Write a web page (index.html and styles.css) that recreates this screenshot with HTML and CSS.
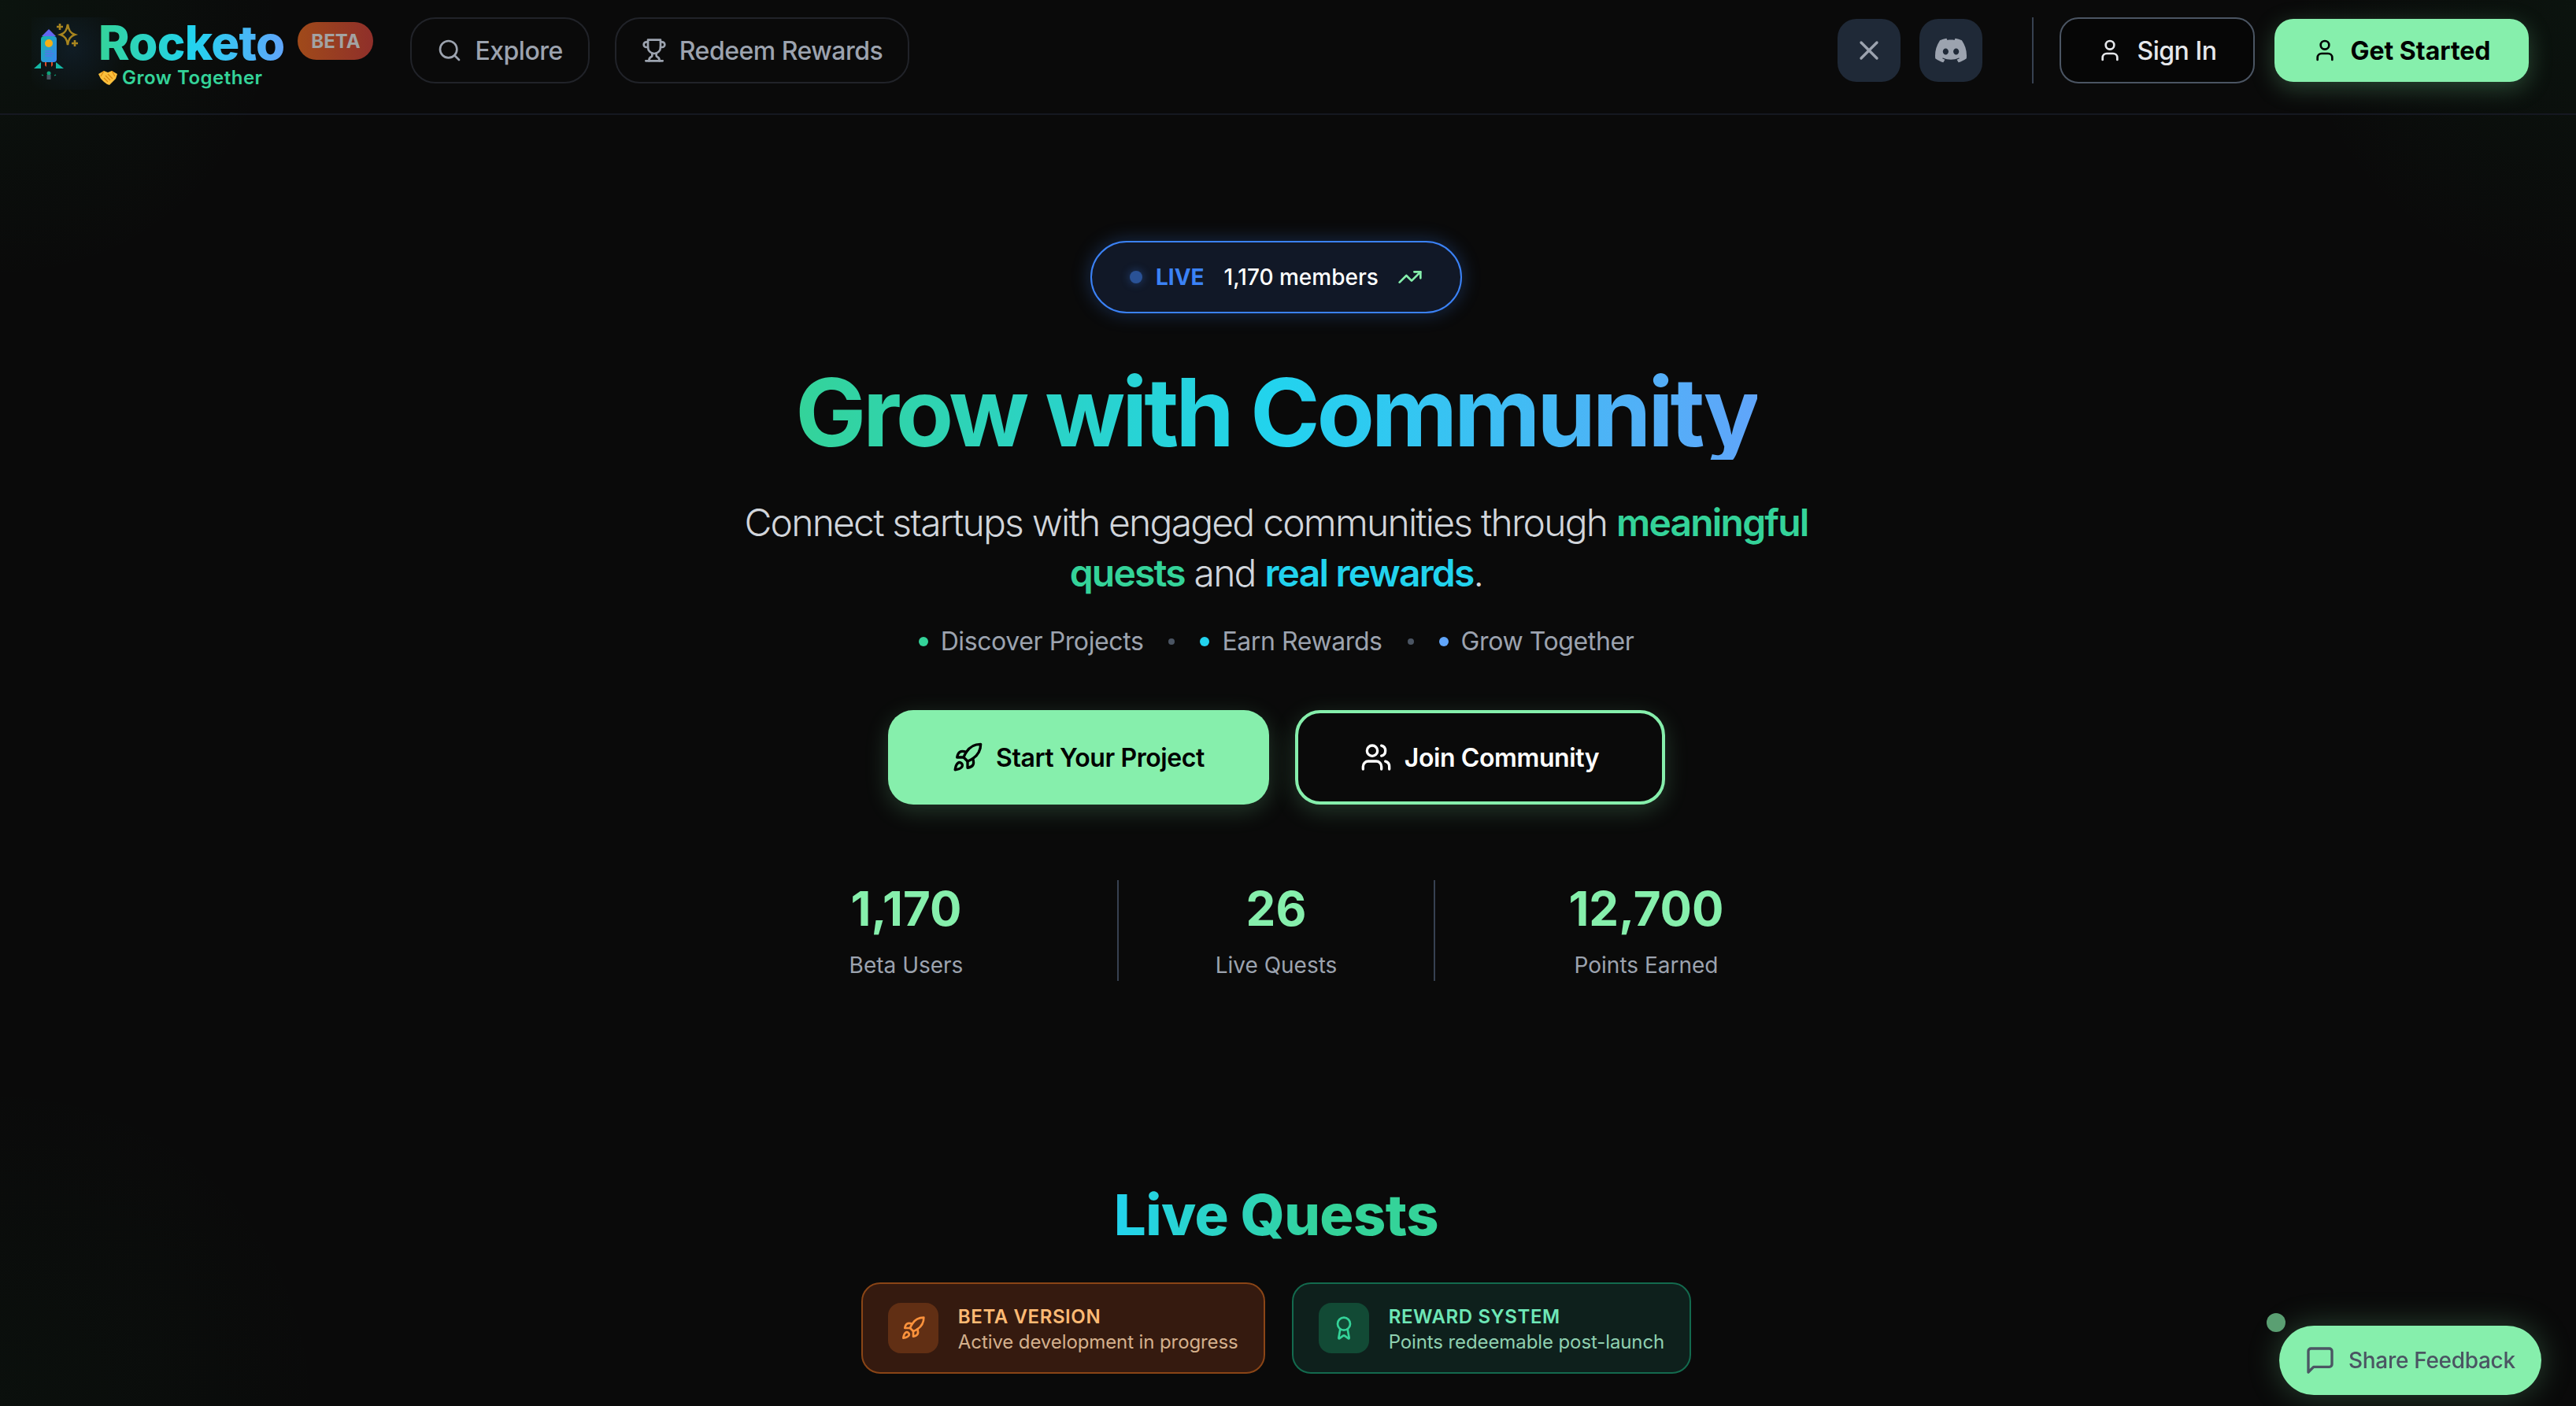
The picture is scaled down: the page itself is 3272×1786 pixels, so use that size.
FILE: index.html
```html
<!DOCTYPE html>
<html lang="en">
<head>
    <meta charset="UTF-8">
    <meta name="viewport" content="width=device-width, initial-scale=1.0">
    <title>Rocketo</title>
    <link rel="stylesheet" href="styles.css">
</head>
<body>
    <svg class="sprite" width="0" height="0">
        <symbol id="i-search" viewBox="0 0 24 24"><circle cx="11" cy="11" r="8"/><path d="m21 21-4.3-4.3"/></symbol>
        <symbol id="i-trophy" viewBox="0 0 24 24"><path d="M6 9H4.5a2.5 2.5 0 0 1 0-5H6"/><path d="M18 9h1.5a2.5 2.5 0 0 0 0-5H18"/><path d="M4 22h16"/><path d="M10 14.66V17c0 .55-.47.98-.97 1.21C7.85 18.75 7 20.24 7 22"/><path d="M14 14.66V17c0 .55.47.98.97 1.21C16.15 18.75 17 20.24 17 22"/><path d="M18 2H6v7a6 6 0 0 0 12 0V2Z"/></symbol>
        <symbol id="i-x" viewBox="0 0 24 24"><path d="M18 6 6 18"/><path d="m6 6 12 12"/></symbol>
        <symbol id="i-user" viewBox="0 0 24 24"><path d="M19 21v-2a4 4 0 0 0-4-4H9a4 4 0 0 0-4 4v2"/><circle cx="12" cy="7" r="4"/></symbol>
        <symbol id="i-users" viewBox="0 0 24 24"><path d="M16 21v-2a4 4 0 0 0-4-4H6a4 4 0 0 0-4 4v2"/><circle cx="9" cy="7" r="4"/><path d="M22 21v-2a4 4 0 0 0-3-3.87"/><path d="M16 3.13a4 4 0 0 1 0 7.75"/></symbol>
        <symbol id="i-rocket" viewBox="0 0 24 24"><path d="M4.5 16.5c-1.5 1.26-2 5-2 5s3.74-.5 5-2c.71-.84.7-2.13-.09-2.91a2.18 2.18 0 0 0-2.91-.09z"/><path d="m12 15-3-3a22 22 0 0 1 2-3.95A12.88 12.88 0 0 1 22 2c0 2.72-.78 7.5-6 11a22.35 22.35 0 0 1-4 2z"/><path d="M9 12H4s.55-3.03 2-4c1.62-1.08 5 0 5 0"/><path d="M12 15v5s3.03-.55 4-2c1.08-1.62 0-5 0-5"/></symbol>
        <symbol id="i-trend" viewBox="0 0 24 24"><polyline points="22 7 13.5 15.5 8.5 10.5 2 17"/><polyline points="16 7 22 7 22 13"/></symbol>
        <symbol id="i-award" viewBox="0 0 24 24"><path d="m15.477 12.89 1.515 8.526a.5.5 0 0 1-.81.47l-3.58-2.687a1 1 0 0 0-1.197 0l-3.586 2.686a.5.5 0 0 1-.81-.469l1.514-8.526"/><circle cx="12" cy="8" r="6"/></symbol>
        <symbol id="i-message" viewBox="0 0 24 24"><path d="M21 15a2 2 0 0 1-2 2H7l-4 4V5a2 2 0 0 1 2-2h14a2 2 0 0 1 2 2z"/></symbol>
    </svg>

    <header class="header">
        <a class="logo">
            <svg class="logo-mark" viewBox="0 0 64 84">
                <defs>
                    <linearGradient id="rocketBody" x1="0" y1="0" x2="1" y2="1">
                        <stop offset="0" stop-color="#14b8a6"/>
                        <stop offset="1" stop-color="#3b82f6"/>
                    </linearGradient>
                </defs>
                <path d="M13 16 22 7 31 16Z" fill="#6366f1"/>
                <rect x="12" y="16" width="20" height="33" rx="4" fill="url(#rocketBody)"/>
                <circle cx="22" cy="25" r="5" fill="#f5b014"/>
                <path d="M17 35h9M17 38h11M17 41h9" stroke="#6366f1" stroke-width="1.2"/>
                <path d="M12 49 3 57H12ZM31 49 41 57H31Z" fill="#14b8a6"/>
                <path d="M17 49h2v6l-2-2ZM27 49h-2v6l2-2Z" fill="#dc4a26"/>
                <circle cx="22" cy="63" r="2.5" fill="#10a37a"/>
                <rect x="19.5" y="65" width="5" height="6" fill="#4b5563"/>
                <path d="M13 65l2 1M31 65l-2 1" stroke="#10a37a" stroke-width="1.2"/>
                <path d="M46 1c1 7 3 11 9 13-6 2-8 6-9 13-1-7-3-11-9-13 6-2 8-6 9-13Z" fill="none" stroke="#a8851f" stroke-width="2.6"/>
                <path d="M36 0v8M32 4h8M55 21v8M51 25h8" stroke="#a8851f" stroke-width="2.6"/>
            </svg>
            <span class="logo-text">
                <span class="logo-name">Rocketo</span>
                <span class="logo-tag">
                    <svg class="handshake" viewBox="0 0 24 18">
                        <path d="M0 4 7 0l5 2 5-2 7 4-2 6-8 8-3-1-4-3-4-4Z" fill="#fbbf3c"/>
                        <path d="M7 0 3 7M17 0l4 7" stroke="#e08e12" stroke-width="1.4"/>
                        <path d="M9 6l6 6M7 9l5 5M12 4l6 6" stroke="#d9860f" stroke-width="1.2"/>
                    </svg>
                    Grow Together
                </span>
            </span>
            <span class="beta-badge">BETA</span>
        </a>
        <nav class="nav">
            <a class="nav-link"><svg class="icon"><use href="#i-search"/></svg>Explore</a>
            <a class="nav-link"><svg class="icon"><use href="#i-trophy"/></svg>Redeem Rewards</a>
        </nav>
        <div class="header-right">
            <a class="social"><svg class="icon icon-x"><use href="#i-x"/></svg></a>
            <a class="social">
                <svg class="discord" viewBox="0 0 24 24"><path d="M20.317 4.3698a19.7913 19.7913 0 00-4.8851-1.5152.0741.0741 0 00-.0785.0371c-.211.3753-.4447.8648-.6083 1.2495-1.8447-.2762-3.68-.2762-5.4868 0-.1636-.3933-.4058-.8742-.6177-1.2495a.077.077 0 00-.0785-.037 19.7363 19.7363 0 00-4.8852 1.515.0699.0699 0 00-.0321.0277C.5334 9.0458-.319 13.5799.0992 18.0578a.0824.0824 0 00.0312.0561c2.0528 1.5076 4.0413 2.4228 5.9929 3.0294a.0777.0777 0 00.0842-.0276c.4616-.6304.8731-1.2952 1.226-1.9942a.076.076 0 00-.0416-.1057c-.6528-.2476-1.2743-.5495-1.8722-.8923a.077.077 0 01-.0076-.1277c.1258-.0943.2517-.1923.3718-.2914a.0743.0743 0 01.0776-.0105c3.9278 1.7933 8.18 1.7933 12.0614 0a.0739.0739 0 01.0785.0095c.1202.099.246.1981.3728.2924a.077.077 0 01-.0066.1276 12.2986 12.2986 0 01-1.873.8914.0766.0766 0 00-.0407.1067c.3604.698.7719 1.3628 1.225 1.9932a.076.076 0 00.0842.0286c1.961-.6067 3.9495-1.5219 6.0023-3.0294a.077.077 0 00.0313-.0552c.5004-5.177-.8382-9.6739-3.5485-13.6604a.061.061 0 00-.0312-.0286zM8.02 15.3312c-1.1825 0-2.1569-1.0857-2.1569-2.419 0-1.3332.9555-2.4189 2.157-2.4189 1.2108 0 2.1757 1.0952 2.1568 2.419 0 1.3332-.9555 2.4189-2.1569 2.4189zm7.9748 0c-1.1825 0-2.1569-1.0857-2.1569-2.419 0-1.3332.9554-2.4189 2.1569-2.4189 1.2108 0 2.1757 1.0952 2.1568 2.419 0 1.3332-.946 2.4189-2.1568 2.4189z"/></svg>
            </a>
            <span class="header-divider"></span>
            <a class="btn-signin"><svg class="icon"><use href="#i-user"/></svg>Sign In</a>
            <a class="btn-started"><svg class="icon"><use href="#i-user"/></svg>Get Started</a>
        </div>
    </header>

    <main class="main">
        <section class="hero">
            <div class="live-pill">
                <span class="live-dot"></span>
                <span class="live-label">LIVE</span>
                <span class="live-count">1,170 members</span>
                <svg class="icon live-trend"><use href="#i-trend"/></svg>
            </div>
            <h1 class="hero-title">Grow with Community</h1>
            <p class="hero-text">Connect startups with engaged communities through <strong class="hl-green">meaningful</strong> <strong class="hl-green">quests</strong> and <strong class="hl-cyan">real rewards</strong>.</p>
            <ul class="hero-points">
                <li><span class="point-dot dot-green"></span>Discover Projects</li>
                <li class="point-sep"></li>
                <li><span class="point-dot dot-cyan"></span>Earn Rewards</li>
                <li class="point-sep"></li>
                <li><span class="point-dot dot-blue"></span>Grow Together</li>
            </ul>
            <div class="hero-actions">
                <a class="cta cta-primary"><svg class="icon"><use href="#i-rocket"/></svg>Start Your Project</a>
                <a class="cta cta-outline"><svg class="icon"><use href="#i-users"/></svg>Join Community</a>
            </div>
            <div class="stats">
                <div class="stat stat-side"><div class="stat-num">1,170</div><div class="stat-label">Beta Users</div></div>
                <div class="stat stat-mid"><div class="stat-num">26</div><div class="stat-label">Live Quests</div></div>
                <div class="stat stat-side"><div class="stat-num">12,700</div><div class="stat-label">Points Earned</div></div>
            </div>
        </section>

        <section class="quests">
            <h2 class="quests-title">Live Quests</h2>
            <div class="notices">
                <div class="notice notice-orange">
                    <span class="notice-icon"><svg class="icon"><use href="#i-rocket"/></svg></span>
                    <div class="notice-body">
                        <div class="notice-title">BETA VERSION</div>
                        <div class="notice-sub">Active development in progress</div>
                    </div>
                </div>
                <div class="notice notice-green">
                    <span class="notice-icon"><svg class="icon"><use href="#i-award"/></svg></span>
                    <div class="notice-body">
                        <div class="notice-title">REWARD SYSTEM</div>
                        <div class="notice-sub">Points redeemable post-launch</div>
                    </div>
                </div>
            </div>
        </section>
    </main>

    <a class="feedback">
        <span class="feedback-dot"></span>
        <svg class="icon"><use href="#i-message"/></svg>Share Feedback
    </a>
</body>
</html>
```

FILE: styles.css
```css
* {
    box-sizing: border-box;
}

html, body {
    height: 100%;
}

body {
    margin: 0;
    overflow: hidden;
    font-family: 'Inter', 'Liberation Sans', sans-serif;
    color: #fff;
    background:
        radial-gradient(circle 360px at 0 0, rgba(34, 197, 94, 0.05), transparent),
        radial-gradient(circle 360px at 100% 0, rgba(34, 197, 94, 0.05), transparent),
        radial-gradient(circle 420px at 0 100%, rgba(34, 197, 94, 0.03), transparent),
        #0a0a0a;
}

.sprite {
    position: absolute;
}

.icon {
    width: 32px;
    height: 32px;
    flex: none;
    fill: none;
    stroke: currentColor;
    stroke-width: 2;
    stroke-linecap: round;
    stroke-linejoin: round;
}

.icon-x {
    width: 40px;
    height: 40px;
}

a {
    display: flex;
    align-items: center;
}

/* header */
.header {
    height: 146px;
    display: flex;
    align-items: flex-start;
    padding: 22px 60px 0 40px;
    border-bottom: 2px solid #151821;
}

.logo {
    margin-right: 47px;
    background: radial-gradient(circle 70px at 52px 40px, rgba(59, 130, 246, 0.1), transparent);
}

.logo-mark {
    width: 64px;
    height: 84px;
    margin-top: 8px;
    margin-right: 21px;
}

.logo-text {
    display: flex;
    flex-direction: column;
}

.logo-name {
    font-size: 60px;
    font-weight: 800;
    line-height: 62px;
    letter-spacing: -0.75px;
    background: linear-gradient(90deg, #34d399, #22d3ee, #60a5fa);
    -webkit-background-clip: text;
    background-clip: text;
    color: transparent;
}

.logo-tag {
    display: flex;
    align-items: center;
    font-size: 24px;
    font-weight: 600;
    line-height: 28px;
    letter-spacing: 0.5px;
    color: #34d399;
}

.handshake {
    width: 24px;
    height: 18px;
    margin-right: 6px;
}

.beta-badge {
    align-self: flex-start;
    margin: 6px 0 0 17px;
    width: 96px;
    height: 48px;
    display: flex;
    align-items: center;
    justify-content: center;
    border-radius: 24px;
    font-size: 24px;
    font-weight: 700;
    color: #a3a3a3;
    background: linear-gradient(90deg, #a04a1a, #8f2f2a);
}

.nav {
    display: flex;
    gap: 32px;
}

.nav-link {
    height: 84px;
    gap: 16px;
    padding: 0 32px;
    border: 2px solid #212329;
    border-radius: 32px;
    font-size: 32px;
    font-weight: 500;
    letter-spacing: -0.5px;
    color: #9ca3af;
}

.header-right {
    margin-left: auto;
    display: flex;
    align-items: center;
}

.social {
    width: 80px;
    height: 80px;
    justify-content: center;
    margin-right: 24px;
    border-radius: 24px;
    background: #1f2937;
    color: #9ca3af;
}

.discord {
    width: 40px;
    height: 40px;
    fill: #9ca3af;
}

.header-divider {
    width: 2px;
    height: 84px;
    margin: 0 33px 0 39px;
    background: #374151;
}

.btn-signin {
    width: 248px;
    height: 84px;
    justify-content: center;
    gap: 18px;
    margin-right: 25px;
    border: 2px solid #4b5563;
    border-radius: 24px;
    font-size: 32px;
    font-weight: 500;
    letter-spacing: -0.45px;
    color: #e5e7eb;
    background: #060606;
}

.btn-started {
    width: 323px;
    height: 80px;
    justify-content: center;
    gap: 16px;
    border-radius: 24px;
    font-size: 32px;
    font-weight: 700;
    color: #000;
    background: #86efac;
    box-shadow: 0 8px 30px rgba(134, 239, 172, 0.25);
}

/* hero */
.main {
    padding-right: 30px;
}

.hero {
    padding-top: 160px;
    display: flex;
    flex-direction: column;
    align-items: center;
}

.live-pill {
    height: 92px;
    width: 472px;
    display: flex;
    align-items: center;
    padding-left: 48px;
    border: 2px solid #3b82f6;
    border-radius: 46px;
    background: #111827;
    box-shadow: 0 0 24px rgba(59, 130, 246, 0.3);
    font-size: 28px;
}

.live-dot {
    width: 16px;
    height: 16px;
    border-radius: 50%;
    background: #2a5296;
    box-shadow: 0 0 12px rgba(59, 130, 246, 0.4);
}

.live-label {
    margin-left: 17px;
    font-weight: 700;
    color: #3b82f6;
}

.live-count {
    margin-left: 25px;
    font-weight: 500;
}

.live-trend {
    margin-left: 24px;
    color: #86efac;
}

.hero-title {
    margin: 66px 0 0;
    font-size: 120px;
    font-weight: 700;
    line-height: 120px;
    letter-spacing: -4.25px;
    background: linear-gradient(90deg, #34d399, #22d3ee, #60a5fa);
    -webkit-background-clip: text;
    background-clip: text;
    color: transparent;
}

.hero-text {
    width: 1400px;
    margin: 48px 0 0;
    font-size: 48px;
    font-weight: 350;
    line-height: 64px;
    letter-spacing: -1.8px;
    text-align: center;
    color: #d1d5db;
}

.hero-text strong {
    font-weight: 600;
}

.hl-green {
    color: #34d399;
}

.hl-cyan {
    color: #22d3ee;
}

.hero-points {
    list-style: none;
    display: flex;
    align-items: center;
    gap: 32px;
    margin: 35px 0 0;
    padding: 0;
    font-size: 32px;
    letter-spacing: -0.4px;
    color: #9ca3af;
}

.hero-points li {
    display: flex;
    align-items: center;
    gap: 16px;
}

.point-dot {
    width: 12px;
    height: 12px;
    border-radius: 50%;
}

.point-sep {
    width: 8px;
    height: 8px;
    border-radius: 50%;
    background: #4b5563;
}

.dot-green { background: #34d399; }
.dot-cyan { background: #22d3ee; }
.dot-blue { background: #60a5fa; }

.hero-actions {
    display: flex;
    gap: 33px;
    margin-top: 68px;
}

.cta {
    height: 120px;
    justify-content: center;
    gap: 16px;
    border-radius: 32px;
    font-size: 32px;
    font-weight: 600;
    letter-spacing: -0.4px;
    box-shadow: 0 8px 30px rgba(134, 239, 172, 0.2);
}

.cta .icon {
    width: 40px;
    height: 40px;
}

.cta-primary {
    width: 484px;
    color: #000;
    background: #86efac;
}

.cta-outline {
    width: 470px;
    color: #fff;
    border: 4px solid #86efac;
    background: #0a0a0a;
}

.stats {
    display: flex;
    margin-top: 96px;
}

.stat {
    height: 128px;
    text-align: center;
}

.stat-side {
    width: 536px;
}

.stat-mid {
    width: 404px;
    border-left: 2px solid #374151;
    border-right: 2px solid #374151;
}

.stat-num {
    margin-top: 6px;
    font-size: 60px;
    font-weight: 700;
    line-height: 60px;
    color: #86efac;
}

.stat-label {
    margin-top: 24px;
    font-size: 28px;
    line-height: 36px;
    color: #9ca3af;
}

/* quests */
.quests {
    margin-top: 257px;
    display: flex;
    flex-direction: column;
    align-items: center;
}

.quests-title {
    margin: 0;
    font-size: 72px;
    font-weight: 800;
    line-height: 80px;
    letter-spacing: -0.55px;
    background: linear-gradient(90deg, #22d3ee, #34d399 65%);
    -webkit-background-clip: text;
    background-clip: text;
    color: transparent;
}

.notices {
    display: flex;
    gap: 34px;
    margin-top: 46px;
}

.notice {
    height: 116px;
    display: flex;
    align-items: center;
    gap: 25px;
    padding: 0 32px;
    border: 2px solid;
    border-radius: 24px;
}

.notice-orange {
    border-color: #8a4516;
    background: #351a0f;
}

.notice-green {
    border-color: #136a4e;
    background: #0e201c;
}

.notice-icon {
    width: 64px;
    height: 64px;
    display: flex;
    align-items: center;
    justify-content: center;
    border-radius: 16px;
}

.notice-orange .notice-icon {
    background: #612f14;
    color: #fb923c;
}

.notice-green .notice-icon {
    background: #124a35;
    color: #34d399;
}

.notice-body {
    padding-top: 3px;
}

.notice-title {
    font-size: 24px;
    font-weight: 600;
    line-height: 32px;
    letter-spacing: 0.6px;
}

.notice-sub {
    font-size: 24px;
    line-height: 32px;
    letter-spacing: -0.1px;
}

.notice-orange .notice-title { color: #fdba74; }
.notice-orange .notice-sub { color: #d4b08c; }
.notice-green .notice-title { color: #6ee7b7; }
.notice-green .notice-sub { color: #8fd0b0; }

/* floating feedback button */
.feedback {
    position: fixed;
    left: 2895px;
    top: 1684px;
    width: 333px;
    height: 88px;
    gap: 16px;
    padding-left: 32px;
    border-radius: 44px;
    font-size: 28px;
    font-weight: 500;
    letter-spacing: -0.3px;
    color: #4b5563;
    background: #86efac;
    box-shadow: 0 0 40px rgba(134, 239, 172, 0.25);
}

.feedback .icon {
    width: 40px;
    height: 40px;
}

.feedback-dot {
    position: absolute;
    left: -16px;
    top: -16px;
    width: 24px;
    height: 24px;
    border-radius: 50%;
    background: #5a9f72;
}
```
